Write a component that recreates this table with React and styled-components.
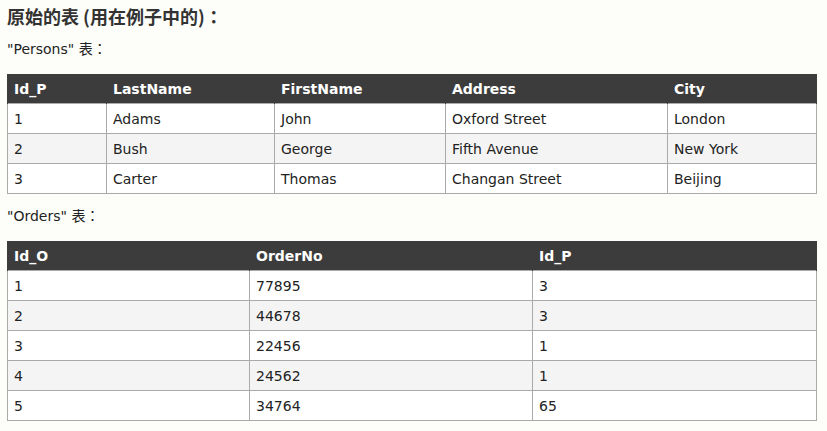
import React from "react";
import styled, { createGlobalStyle } from "styled-components";

const GlobalStyle = createGlobalStyle`
  body {
    margin: 0;
    background: #fdfdf9;
    font-family: "DejaVu Sans", Verdana, "Noto Sans CJK TC", sans-serif;
    color: #222;
  }
`;

const persons = {
  columns: [
    { label: "Id_P", width: 99 },
    { label: "LastName", width: 168 },
    { label: "FirstName", width: 171 },
    { label: "Address", width: 222 },
    { label: "City", width: 149 },
  ],
  rows: [
    ["1", "Adams", "John", "Oxford Street", "London"],
    ["2", "Bush", "George", "Fifth Avenue", "New York"],
    ["3", "Carter", "Thomas", "Changan Street", "Beijing"],
  ],
};

const orders = {
  columns: [
    { label: "Id_O", width: 242 },
    { label: "OrderNo", width: 283 },
    { label: "Id_P", width: 284 },
  ],
  rows: [
    ["1", "77895", "3"],
    ["2", "44678", "3"],
    ["3", "22456", "1"],
    ["4", "24562", "1"],
    ["5", "34764", "65"],
  ],
};

const DataTable = ({ data }) => (
  <Table>
    <colgroup>
      {data.columns.map((c) => (
        <col key={c.label} style={{ width: c.width }} />
      ))}
    </colgroup>
    <thead>
      <tr>
        {data.columns.map((c) => (
          <HeadCell key={c.label}>{c.label}</HeadCell>
        ))}
      </tr>
    </thead>
    <tbody>
      {data.rows.map((row, i) => (
        <Row key={i}>
          {row.map((cell, j) => (
            <Cell key={j}>{cell}</Cell>
          ))}
        </Row>
      ))}
    </tbody>
  </Table>
);

const App = () => (
  <>
    <GlobalStyle />
    <Page>
      <Heading>原始的表 (用在例子中的)：</Heading>
      <Caption>"Persons" 表：</Caption>
      <DataTable data={persons} />
      <Caption>"Orders" 表：</Caption>
      <DataTable data={orders} />
    </Page>
  </>
);

const Page = styled.div`
  padding: 5px 10px 0 7px;
`;

const Heading = styled.h2`
  margin: 0;
  font-family: "Noto Sans CJK TC", "DejaVu Sans", sans-serif;
  font-size: 18px;
  line-height: 22px;
  font-weight: bold;
  color: #333;
`;

const Caption = styled.p`
  margin: 12px 0 15px;
  font-size: 14px;
  line-height: 20px;
  color: #222;
`;

const Table = styled.table`
  width: 809px;
  border-collapse: collapse;
  table-layout: fixed;
  border: 1px solid #aaa;
`;

const HeadCell = styled.th`
  background: #3c3c3c;
  color: #fff;
  font-size: 14px;
  font-weight: bold;
  text-align: left;
  height: 28px;
  padding: 0 6px;
  border: 1px solid #3c3c3c;
  border-bottom: none;
`;

const Row = styled.tr`
  &:nth-child(even) {
    background: #f4f4f4;
  }
  &:nth-child(odd) {
    background: #fff;
  }
`;

const Cell = styled.td`
  font-size: 14px;
  height: 29px;
  padding: 0 6px;
  border: 1px solid #aaa;
  color: #222;
`;

export default App;
